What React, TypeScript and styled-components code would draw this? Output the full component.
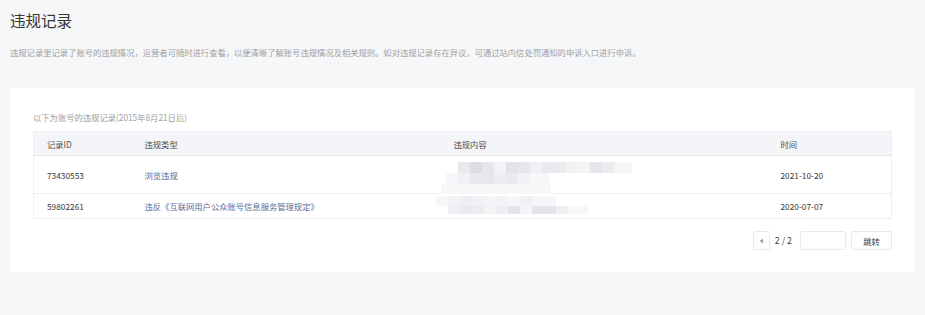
import styled, { createGlobalStyle } from "styled-components";

const GlobalStyle = createGlobalStyle`
  html, body {
    margin: 0;
    padding: 0;
    background: #f6f7f9;
  }
  body {
    font-family: "Noto Sans CJK SC", "Noto Sans", sans-serif;
    color: #353535;
  }
`;

const Page = styled.div`
  padding: 10px 10px 0;
  height: 305px;
`;

const Title = styled.h2`
  margin: 0;
  font-size: 15.5px;
  line-height: 20px;
  font-weight: 400;
  color: #353535;
`;

const Desc = styled.p`
  margin: 16px 0 0;
  font-size: 8.3px;
  line-height: 12px;
  color: #a0a0a0;
`;

const Card = styled.div`
  margin-top: 30px;
  background: #fff;
  padding: 23px 23px 22px;
`;

const SubTitle = styled.div`
  font-size: 8.3px;
  line-height: 12px;
  color: #a0a0a0;
`;

const Table = styled.table`
  margin-top: 8px;
  width: 100%;
  border-collapse: collapse;
  border: 1px solid #eeeff2;
  table-layout: fixed;
  font-size: 8.3px;
`;

const Th = styled.th<{ $w?: number }>`
  box-sizing: border-box;
  width: ${(p) => (p.$w ? `${p.$w}px` : "auto")};
  height: 24px;
  padding: 0 13px;
  background: #f4f5f8;
  border-bottom: 1px solid #e5e6ea;
  text-align: left;
  font-weight: 400;
  color: #505050;
`;

const Td = styled.td<{ $h: number }>`
  height: ${(p) => p.$h}px;
  padding: 0 13px;
  border-bottom: 1px solid #eceef1;
  color: #3a3a3a;
  vertical-align: middle;
`;

const MosaicTd = styled(Td)`
  padding: 0;
`;

const LinkText = styled.a`
  color: #5b6c98;
  text-decoration: none;
  cursor: pointer;
`;

const Pager = styled.div`
  margin-top: 12px;
  display: flex;
  justify-content: flex-end;
  align-items: center;
`;

const PrevBtn = styled.button`
  width: 17px;
  height: 19px;
  padding: 0;
  border: 1px solid #e9eaed;
  border-radius: 2px;
  background: #fff;
  display: flex;
  align-items: center;
  justify-content: center;
`;

const PageNum = styled.span`
  margin: 0 8px 0 5px;
  font-size: 8.8px;
  color: #454545;
`;

const JumpInput = styled.input`
  box-sizing: border-box;
  width: 46px;
  height: 19px;
  border: 1px solid #e9eaed;
  border-radius: 2px;
  outline: none;
`;

const JumpBtn = styled.button`
  box-sizing: border-box;
  margin-left: 5px;
  width: 41px;
  height: 19px;
  border: 1px solid #e9eaed;
  border-radius: 2px;
  background: #fff;
  font-family: inherit;
  font-size: 8.3px;
  color: #353535;
  padding: 0;
`;

type Cell = [number, number, number, number, string];

const mosaic1: Cell[] = [
  [17, 6, 12, 11, "#e8e9ee"],
  [29, 6, 12, 11, "#dcdde5"],
  [41, 6, 12, 11, "#e6e7ec"],
  [53, 6, 12, 11, "#f3f3f6"],
  [65, 6, 12, 11, "#e3e4ea"],
  [77, 6, 12, 11, "#e6e7ec"],
  [89, 6, 12, 11, "#f0f1f4"],
  [101, 6, 12, 11, "#e9eaee"],
  [113, 6, 12, 11, "#ebecf0"],
  [125, 6, 12, 11, "#f1f2f4"],
  [137, 6, 12, 11, "#f4f4f6"],
  [149, 6, 12, 11, "#e5e6eb"],
  [161, 6, 12, 11, "#ebecf0"],
  [173, 6, 18, 11, "#f6f6f8"],
  [5, 17, 12, 11, "#f6f7f8"],
  [17, 17, 12, 11, "#f0f1f4"],
  [29, 17, 12, 11, "#e8e9ee"],
  [41, 17, 12, 11, "#e6e7ec"],
  [53, 17, 12, 11, "#ecedf1"],
  [65, 17, 12, 11, "#e9eaee"],
  [77, 17, 12, 11, "#f1f2f5"],
  [89, 17, 20, 11, "#f7f7f9"],
  [0, 28, 110, 10, "#f7f7f9"],
];

const mosaic2: Cell[] = [
  [-5, 2, 12, 10, "#f7f7f9"],
  [7, 2, 12, 10, "#f2f3f5"],
  [19, 2, 12, 10, "#eeeff2"],
  [31, 2, 12, 10, "#f1f2f5"],
  [43, 2, 12, 10, "#f5f5f7"],
  [55, 2, 12, 10, "#f2f3f5"],
  [67, 2, 12, 10, "#f7f7f9"],
  [79, 2, 12, 10, "#f0f1f4"],
  [91, 2, 12, 10, "#f6f6f8"],
  [103, 2, 12, 10, "#f7f7f9"],
  [7, 12, 12, 8, "#eeeff2"],
  [19, 12, 12, 8, "#e9eaee"],
  [31, 12, 12, 8, "#ebecf0"],
  [43, 12, 12, 8, "#f3f4f6"],
  [55, 12, 12, 8, "#eceef1"],
  [67, 12, 12, 8, "#e2e4e9"],
  [79, 12, 12, 8, "#f5f5f7"],
  [91, 12, 12, 8, "#e1e3e8"],
  [103, 12, 12, 8, "#e4e5ea"],
  [115, 12, 12, 8, "#eeeff2"],
  [127, 12, 20, 8, "#f7f7f9"],
];

const Mosaic = ({ cells, h, id }: { cells: Cell[]; h: number; id: string }) => (
  <svg width="210" height={h} style={{ display: "block", overflow: "visible" }}>
    <defs>
      <filter id={id} x="-10%" y="-30%" width="120%" height="160%">
        <feGaussianBlur stdDeviation="0.6" />
      </filter>
    </defs>
    <g filter={`url(#${id})`}>
      {cells.map(([x, y, w, ch, c], i) => (
        <rect key={i} x={x} y={y} width={w} height={ch} fill={c} />
      ))}
    </g>
  </svg>
);

const Triangle = () => (
  <svg width="5" height="6" viewBox="0 0 5 6">
    <path d="M4 0.5 L0.8 3 L4 5.5 Z" fill="#9a9a9a" />
  </svg>
);

const rows = [
  { id: "73430553", type: "浏览违规", h: 37, cells: mosaic1 },
  {
    id: "59802261",
    type: "违反《互联网用户公众账号信息服务管理规定》",
    h: 24,
    cells: mosaic2,
  },
];

const dates = ["2021-10-20", "2020-07-07"];

export default function App() {
  return (
    <>
      <GlobalStyle />
      <Page>
        <Title>违规记录</Title>
        <Desc>
          违规记录里记录了账号的违规情况，运营者可随时进行查看，以便清晰了解账号违规情况及相关规则。如对违规记录存在异议，可通过站内信处罚通知的申诉入口进行申诉。
        </Desc>
        <Card>
          <SubTitle>以下为账号的违规记录(2015年8月21日后)</SubTitle>
          <Table>
            <thead>
              <tr>
                <Th $w={98}>记录ID</Th>
                <Th $w={309}>违规类型</Th>
                <Th>违规内容</Th>
                <Th $w={124}>时间</Th>
              </tr>
            </thead>
            <tbody>
              {rows.map((r, i) => (
                <tr key={r.id}>
                  <Td $h={r.h}>{r.id}</Td>
                  <Td $h={r.h}>
                    <LinkText>{r.type}</LinkText>
                  </Td>
                  <MosaicTd $h={r.h}>
                    <Mosaic cells={r.cells} h={r.h} id={`mz${i}`} />
                  </MosaicTd>
                  <Td $h={r.h}>{dates[i]}</Td>
                </tr>
              ))}
            </tbody>
          </Table>
          <Pager>
            <PrevBtn>
              <Triangle />
            </PrevBtn>
            <PageNum>2 / 2</PageNum>
            <JumpInput />
            <JumpBtn>跳转</JumpBtn>
          </Pager>
        </Card>
      </Page>
    </>
  );
}
